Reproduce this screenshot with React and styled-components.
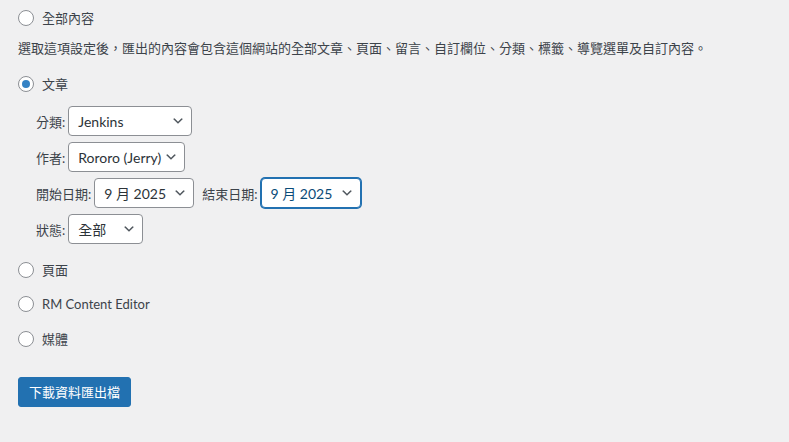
import React from "react";
import styled, { createGlobalStyle, css } from "styled-components";

const Global = createGlobalStyle`
  html, body { margin: 0; padding: 0; background: #f0f0f1; }
  body {
    font-family: Lato, "Noto Sans CJK TC", sans-serif;
    font-size: 13px;
    color: #3c434a;
  }
`;

const Page = styled.fieldset`
  border: 0;
  margin: 0;
  padding: 10px 18px 0 18px;
  display: flex;
  flex-direction: column;
  align-items: flex-start;
  min-height: 442px;
  box-sizing: border-box;
`;

const RadioRow = styled.label`
  display: flex;
  align-items: center;
  gap: 8px;
  height: 16px;
  line-height: 16px;
  margin-top: ${(p) => p.$mt || 0}px;
  cursor: pointer;
`;

const RadioCircle = styled.span`
  width: 16px;
  height: 16px;
  box-sizing: border-box;
  border: 1px solid #8c8f94;
  border-radius: 50%;
  background: #fff;
  display: flex;
  align-items: center;
  justify-content: center;
  flex-shrink: 0;
  ${(p) =>
    p.$checked &&
    css`
      &::after {
        content: "";
        width: 8px;
        height: 8px;
        border-radius: 50%;
        background: #3582c4;
      }
    `}
`;

const Description = styled.p`
  margin: 12px 0 0 0;
  line-height: 20px;
  height: 20px;
`;

const Filters = styled.ul`
  list-style: none;
  margin: 14px 0 0 0;
  padding: 0 0 0 18px;
  display: flex;
  flex-direction: column;
  gap: 6px;
`;

const FilterRow = styled.li`
  display: flex;
  align-items: center;
  gap: 3px;
  height: 30px;
`;

const FieldLabel = styled.span`
  white-space: nowrap;
  margin-left: ${(p) => p.$ml || 0}px;
`;

const Select = styled.div`
  width: ${(p) => p.$w}px;
  height: 30px;
  box-sizing: border-box;
  border: 1px solid ${(p) => (p.$focus ? "#2271b1" : "#8c8f94")};
  box-shadow: ${(p) => (p.$focus ? "0 0 0 1px #2271b1" : "none")};
  border-radius: 4px;
  background: #fff;
  color: ${(p) => (p.$focus ? "#0a4b78" : "#2c3338")};
  font-size: 14px;
  display: flex;
  align-items: center;
  justify-content: space-between;
  padding: 0 6px 0 9px;
  white-space: nowrap;
`;

const Chevron = () => (
  <svg width="14" height="14" viewBox="0 0 20 20" style={{ flexShrink: 0 }}>
    <path d="M5 6l5 5 5-5 2 1-7 7-7-7 2-1z" fill="#50575e" />
  </svg>
);

const Button = styled.button`
  margin-top: 30px;
  height: 30px;
  padding: 0 10px;
  border: 1px solid #2271b1;
  border-radius: 3px;
  background: #2271b1;
  color: #fff;
  font-family: inherit;
  font-size: 13px;
  line-height: 28px;
  cursor: pointer;
`;

function Radio({ label, checked, mt }) {
  return (
    <RadioRow $mt={mt}>
      <RadioCircle $checked={checked} />
      <span>{label}</span>
    </RadioRow>
  );
}

function Field({ value, width, focus }) {
  return (
    <Select $w={width} $focus={focus}>
      <span>{value}</span>
      <Chevron />
    </Select>
  );
}

export default function App() {
  return (
    <>
      <Global />
      <Page>
        <Radio label="全部內容" />
        <Description>
          選取這項設定後，匯出的內容會包含這個網站的全部文章、頁面、留言、自訂欄位、分類、標籤、導覽選單及自訂內容。
        </Description>
        <Radio label="文章" checked mt={18} />
        <Filters>
          <FilterRow>
            <FieldLabel>分類:</FieldLabel>
            <Field value="Jenkins" width={124} />
          </FilterRow>
          <FilterRow>
            <FieldLabel>作者:</FieldLabel>
            <Field value="Rororo (Jerry)" width={117} />
          </FilterRow>
          <FilterRow>
            <FieldLabel>開始日期:</FieldLabel>
            <Field value="9 月 2025" width={100} />
            <FieldLabel $ml={5}>結束日期:</FieldLabel>
            <Field value="9 月 2025" width={100} focus />
          </FilterRow>
          <FilterRow>
            <FieldLabel>狀態:</FieldLabel>
            <Field value="全部" width={75} />
          </FilterRow>
        </Filters>
        <Radio label="頁面" mt={18} />
        <Radio label="RM Content Editor" mt={18} />
        <Radio label="媒體" mt={19} />
        <Button>下載資料匯出檔</Button>
      </Page>
    </>
  );
}
